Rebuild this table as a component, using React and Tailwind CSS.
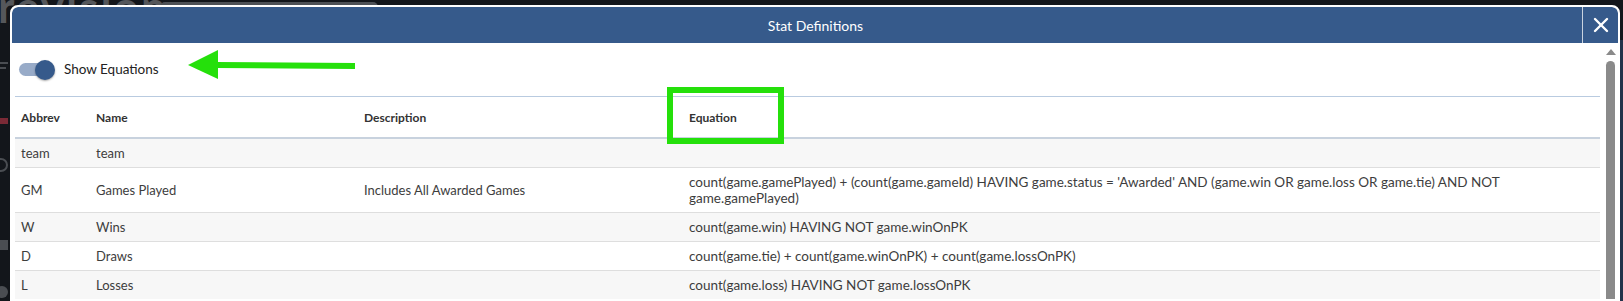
import React from 'react';
import { X } from 'lucide-react';

const stats = [
  { abbrev: "team", name: "team", description: "", equation: "" },
  {
    abbrev: "GM",
    name: "Games Played",
    description: "Includes All Awarded Games",
    equation: [
      "count(game.gamePlayed) + (count(game.gameId) HAVING game.status = 'Awarded' AND (game.win OR game.loss OR game.tie) AND NOT",
      "game.gamePlayed)",
    ],
  },
  { abbrev: "W", name: "Wins", description: "", equation: "count(game.win) HAVING NOT game.winOnPK" },
  { abbrev: "D", name: "Draws", description: "", equation: "count(game.tie) + count(game.winOnPK) + count(game.lossOnPK)" },
  { abbrev: "L", name: "Losses", description: "", equation: "count(game.loss) HAVING NOT game.lossOnPK" },
];

const Toggle = ({ label }) => (
  <div className="flex items-center h-[53px] pl-[4px]">
    <div className="relative w-[36px] h-[20px] flex items-center">
      <div className="w-[30px] h-[13px] rounded-full bg-[#98abc8]" />
      <div className="absolute right-0 top-0 w-[20px] h-[20px] rounded-full bg-[#365a8b] shadow-[0_1px_2px_rgba(0,0,0,0.35)]" />
    </div>
    <span className="ml-[9px] text-[13.5px] text-[#222]">{label}</span>
  </div>
);

const App = () => {
  return (
    <div className="relative w-[1623px] h-[301px] overflow-hidden bg-[#13161b] pt-[5px] pl-[10px] pr-[3px]" style={{ fontFamily: "Lato, 'Open Sans', sans-serif" }}>
      {/* backdrop bits */}
      <div className="absolute left-[-2px] top-[-27px] text-[44px] font-bold tracking-[2px] text-[#55575b]">revision</div>
      <div className="absolute left-[160px] top-[2px] w-[218px] h-[5px] rounded-t-md bg-[#4e5156]" />
      <div className="absolute left-0 top-[62px] w-[8px] h-[2px] bg-[#4a4d52]" />
      <div className="absolute left-0 top-[67px] w-[6px] h-[2px] bg-[#4a4d52]" />
      <div className="absolute left-0 top-[118px] w-[8px] h-[6px] bg-[#7a2a36]" />
      <div className="absolute left-[-6px] top-[158px] w-[14px] h-[14px] rounded-full border-2 border-[#4a4d52]" />
      <div className="absolute left-0 top-[240px] w-[8px] h-[10px] bg-[#4a4d52]" />
      <div className="absolute left-[-4px] top-[286px] w-[12px] h-[12px] rounded-full bg-[#4a4d52]" />
      <div className="absolute right-0 top-[40px] w-[3px] h-[261px] bg-[#22324a]" />

      <div className="relative z-10 h-[296px] bg-white border-2 border-white rounded-t-[8px] flex flex-col overflow-hidden">
        <div className="flex h-[36px] shrink-0 bg-[#365a8b] rounded-t-[6px]">
          <div className="flex-1 flex items-center justify-center pl-[37px] text-white text-[14px]">Stat Definitions</div>
          <div className="w-[36px] border-l border-[#c9d3e0] flex items-center justify-center text-white">
            <X size={24} strokeWidth={2.4} />
          </div>
        </div>

        <div className="flex flex-1 min-h-0">
          <div className="flex-1 pl-[3px] pr-[3px]">
            <Toggle label="Show Equations" />
            <table className="w-full table-fixed border-collapse text-[13px] text-[#3d3d3d]">
              <colgroup>
                <col className="w-[75px]" />
                <col className="w-[268px]" />
                <col className="w-[325px]" />
                <col />
              </colgroup>
              <thead>
                <tr className="h-[41px] border-t border-[#b9cbe0] border-b-2 border-b-[#c8d2de]">
                  {["Abbrev", "Name", "Description", "Equation"].map((h) => (
                    <th key={h} className="text-left font-bold text-[12px] text-[#333] pl-[6px] pt-[2px]">{h}</th>
                  ))}
                </tr>
              </thead>
              <tbody>
                {stats.map((s, i) => (
                  <tr key={s.abbrev} className={`border-b border-[#dedede] ${i % 2 === 0 ? 'bg-[#f7f7f7]' : 'bg-white'}`}>
                    <td className="pl-[6px] py-[6px] leading-[16px] align-middle">{s.abbrev}</td>
                    <td className="pl-[6px] py-[6px] leading-[16px] align-middle">{s.name}</td>
                    <td className="pl-[6px] py-[6px] leading-[16px] align-middle">{s.description}</td>
                    <td className="pl-[6px] py-[6px] leading-[16px] align-middle whitespace-nowrap text-[13.5px]">
                      {Array.isArray(s.equation) ? s.equation.map((line, j) => <div key={j}>{line}</div>) : s.equation}
                    </td>
                  </tr>
                ))}
              </tbody>
            </table>
          </div>

          {/* scrollbar */}
          <div className="w-[15px] flex flex-col items-center pt-[6px]">
            <div className="w-0 h-0 border-l-[5px] border-r-[5px] border-b-[6px] border-l-transparent border-r-transparent border-b-[#8a8a8a]" />
            <div className="mt-[6px] w-[9px] flex-1 rounded-t-full bg-[#8a8a8a]" />
          </div>
        </div>
      </div>

      {/* annotations */}
      <svg className="absolute z-20 left-[186px] top-[48px]" width="172" height="34" viewBox="0 0 172 34">
        <polygon points="2,17 32,2 32,31" fill="#25e00b" />
        <line x1="30" y1="17" x2="169" y2="18" stroke="#25e00b" strokeWidth="6" />
      </svg>
      <div className="absolute z-20 left-[667px] top-[87px] w-[117px] h-[57px] border-[6px] border-[#25e00b]" />
    </div>
  );
};

export default App;
